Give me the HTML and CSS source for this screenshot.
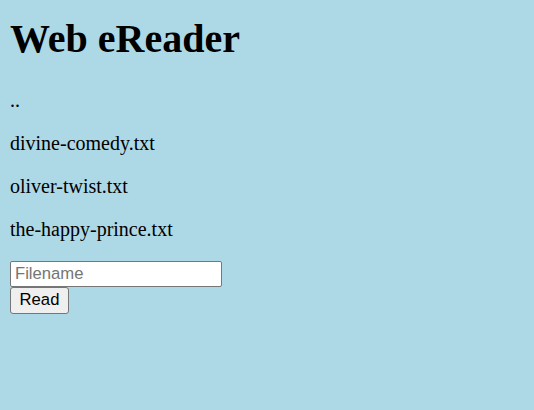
FILE: index.html
```html
<!DOCTYPE html>
<html>
<head>
<meta charset="utf-8">
<title>Web eReader</title>
<link rel="stylesheet" href="styles.css">
</head>
<body>
<h1 class="title">Web eReader</h1>
<p class="entry">..</p>
<p class="entry">divine-comedy.txt</p>
<p class="entry">oliver-twist.txt</p>
<p class="entry">the-happy-prince.txt</p>
<form class="reader-form">
<input class="filename" type="text" placeholder="Filename">
<button class="read-btn" type="button">Read</button>
</form>
</body>
</html>
```
FILE: styles.css
```css
html {
  background: #add8e6;
}
body {
  margin: 0 10px 10px;
  font-family: "Liberation Serif", "Times New Roman", serif;
  font-size: 20px;
  line-height: 1.15;
  color: #000;
}
.title {
  font-size: 40px;
  font-weight: bold;
  margin: 16px 0 26.8px;
  line-height: 1.15;
}
.entry {
  margin: 20px 0;
}
.reader-form {
  display: flex;
  flex-direction: column;
  align-items: flex-start;
  margin: 0;
}
.filename {
  box-sizing: border-box;
  width: 212px;
  height: 26px;
  margin: 0;
  padding: 1px 4px;
  border: 1px solid #767676;
  border-radius: 2px;
  background: #fff;
  font-family: "Liberation Sans", Arial, sans-serif;
  font-size: 16.67px;
  color: #000;
}
.filename::placeholder {
  color: #757575;
}
.read-btn {
  box-sizing: border-box;
  width: 59px;
  height: 27px;
  margin: 0;
  padding: 0 6px;
  border: 1px solid #767676;
  border-radius: 3px;
  background: #efefef;
  font-family: "Liberation Sans", Arial, sans-serif;
  font-size: 16.67px;
  color: #000;
}
```
